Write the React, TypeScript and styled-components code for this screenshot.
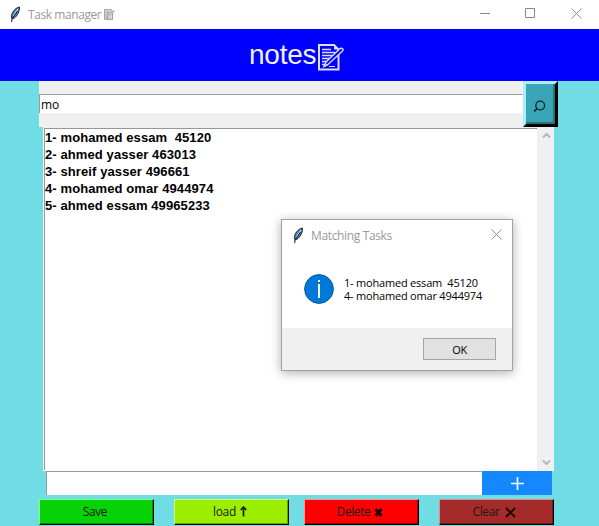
import React from "react";
import styled, { createGlobalStyle } from "styled-components";

const Global = createGlobalStyle`
  * { box-sizing: border-box; }
  body { margin: 0; overflow: hidden; font-family: "Open Sans", "Noto Sans", sans-serif; }
  button, input { font: inherit; margin: 0; padding: 0; border: 0; border-radius: 0; outline: 0; color: #000; }
`;

const Window = styled.div`
  position: relative;
  display: flex;
  flex-direction: column;
  width: 599px;
  height: 526px;
  background: #70dce3;
  overflow: hidden;
`;

const TitleBar = styled.header`
  display: flex;
  align-items: center;
  height: 29px;
  padding: 0 17px 0 8px;
  background: #fff;
  color: #999;
  font-size: 12px;
`;

const TitleText = styled.span<{ $spacing: string }>`
  margin-left: 6px;
  letter-spacing: ${(p) => p.$spacing};
  white-space: pre;
`;

const TitleNote = styled.span`
  display: flex;
  margin-left: 3px;
  margin-right: auto;
`;

const WindowControls = styled.div`
  display: flex;
  gap: 34px;
  align-items: center;
  padding-bottom: 3px;
  svg { display: block; }
  svg:last-child { margin-left: 1px; }
`;

const Banner = styled.h1`
  display: flex;
  align-items: center;
  height: 52px;
  margin: 0;
  padding: 0 0 0 249px;
  background: #0000fe;
  color: #f0f0f0;
  font: 400 28px/52px "Liberation Sans", Arial, sans-serif;
  letter-spacing: -0.25px;
  svg { display: block; margin: 4px 0 0 2px; }
`;

const SearchRow = styled.div`
  display: flex;
  align-items: flex-start;
  width: 519px;
  height: 46px;
  margin-left: 39px;
  background: #f0f0f0;
`;

const Entry = styled.input<{ $height: number; $top?: number }>`
  flex: 1;
  min-width: 0;
  height: ${(p) => p.$height}px;
  margin-top: ${(p) => p.$top ?? 0}px;
  background: #fff;
  border-top: 1px solid #9b9b9b;
  border-left: 1px solid #9b9b9b;
  border-right: 1px solid #fff;
  padding-left: 1px;
  font-size: 12px;
`;

const SearchButton = styled.button`
  display: flex;
  align-items: center;
  justify-content: center;
  width: 35px;
  height: 46px;
  padding: 4px 2px 0 0;
  background: #3ba5b8;
  border: 3px solid;
  border-color: #a6f0fc #000 #000 #a6f0fc;
  box-shadow: inset -2px -2px #28717e;
`;

const ListArea = styled.div`
  display: flex;
  width: 511px;
  height: 344px;
  margin-left: 43px;
`;

const TaskList = styled.ol`
  flex: 1;
  margin: 0;
  padding: 1px 0 0 0;
  list-style: none;
  background: #fff;
  border: 1px solid;
  border-color: #f0f0f0 #eee #fff #fff;
  box-shadow: inset 1px 1px #969696;
  font: 700 13px/17px "Liberation Sans", Arial, sans-serif;
  letter-spacing: 0.1px;
`;

const Task = styled.li`
  height: 17px;
  padding-left: 1px;
  white-space: pre;
`;

const Scrollbar = styled.div`
  display: flex;
  flex-direction: column;
  align-items: center;
  justify-content: space-between;
  width: 16px;
  padding: 5px 0;
  background: #f0f0f0;
`;

const AddRow = styled.div`
  display: flex;
  width: 506px;
  height: 24px;
  margin-left: 46px;
`;

const AddButton = styled.button`
  display: flex;
  align-items: center;
  justify-content: center;
  width: 70px;
  background: #1688ff;
`;

const Actions = styled.div`
  display: flex;
  margin: 4px 0 0 39px;
`;

const ActionButton = styled.button<{ $bg: string; $light: string; $dark: string; $after: number; $gap?: number; $spacing?: string }>`
  display: flex;
  align-items: center;
  justify-content: center;
  gap: ${(p) => p.$gap ?? 4}px;
  width: 115px;
  height: 26px;
  margin-right: ${(p) => p.$after}px;
  padding-right: 3px;
  background: ${(p) => p.$bg};
  border: 1px solid;
  border-color: ${(p) => p.$light} #000 #000 ${(p) => p.$light};
  box-shadow: inset -1px -1px ${(p) => p.$dark};
  font-size: 12px;
  line-height: 22px;
  letter-spacing: ${(p) => p.$spacing ?? "-0.4px"};
  color: #1b1b10;
`;

const Dialog = styled.section`
  position: absolute;
  left: 281px;
  top: 219px;
  display: flex;
  flex-direction: column;
  width: 232px;
  height: 152px;
  background: #fff;
  border: 1px solid #a3a3a3;
  box-shadow: 0 2px 10px rgba(0, 0, 0, 0.32);
`;

const DialogTitle = styled.div`
  display: flex;
  align-items: center;
  height: 30px;
  padding: 0 10px 0 9px;
  color: #999;
  font-size: 12px;
  > :last-child { margin: -2px 0 0 auto; }
`;

const DialogBody = styled.div`
  display: flex;
  flex: 1;
  align-items: center;
  gap: 10px;
  padding: 0 0 0 22px;
`;

const Message = styled.p`
  margin: 0;
  font-size: 11px;
  line-height: 13px;
  letter-spacing: -0.2px;
  white-space: pre;
`;

const DialogFooter = styled.footer`
  display: flex;
  justify-content: flex-end;
  height: 42px;
  padding: 10px 16px 0 0;
  background: #f0f0f0;
`;

const OkButton = styled.button`
  width: 73px;
  height: 22px;
  padding-top: 1px;
  background: #e1e1e1;
  border: 1px solid #a5a5a5;
  font-size: 11px;
  line-height: 19px;
  letter-spacing: -0.3px;
`;

const Feather = () => (
  <svg width="14" height="17" viewBox="0 0 14 17">
    <path d="M11.500 1C7 2 3.400 6.500 3.400 11l.9 2C8.500 11.600 11.500 6.500 11.500 1Z" fill="#557bb0" stroke="#17243e" strokeWidth="1" />
    <path d="M10 3 5.300 10" stroke="#c6dcf5" strokeWidth="1.200" fill="none" />
    <path d="M9.500 5 4 13l-.3 3" stroke="#111827" strokeWidth="1" fill="none" />
  </svg>
);

const Memo = ({ w, h, color, paper }: { w: number; h: number; color: string; paper: string }) => (
  <svg width={w} height={h} viewBox="0 0 26 27">
    <path d="M1 1H16L20.500 5.500V25.500H1Z" fill={paper} stroke={color} strokeWidth="2" />
    <path d="M16 1V5.500H20.500Z" fill={color} />
    <path d="M4 5.500H13M4 8.500H17M4 11.500H16M4 14.500H14M4 17.500H11M4 20.500H8" fill="none" stroke={color} strokeWidth="1.300" />
    <path d="M6 22.500 8 18 22 4.500C24 3.500 26 5.500 24.500 7L10 20.500Z" fill={paper} stroke={color} strokeWidth="1.400" />
    <path d="M6 22.500l3.500-2M11 22.500h6" stroke={color} strokeWidth="1.200" />
  </svg>
);

const Close = () => (
  <svg width="11" height="11" viewBox="0 0 11 11">
    <path d="M.5.5l10 10M10.500.5l-10 10" stroke="#8c8c8c" />
  </svg>
);

const Chevron = ({ down }: { down?: boolean }) => (
  <svg width="9" height="7" viewBox="0 0 9 7">
    <path d={down ? "M1 1.500 4.500 5 8 1.500" : "M1 5.500 4.500 2 8 5.500"} fill="none" stroke="#b8b8b8" strokeWidth="2" />
  </svg>
);

const tasks = [
  "1- mohamed essam  45120",
  "2- ahmed yasser 463013",
  "3- shreif yasser 496661",
  "4- mohamed omar 4944974",
  "5- ahmed essam 49965233",
];

export default function App() {
  return (
    <>
      <Global />
      <Window>
        <TitleBar>
          <Feather />
          <TitleText $spacing="-0.42px">Task manager</TitleText>
          <TitleNote><Memo w={11} h={11} color="#888" paper="#e4e4e4" /></TitleNote>
          <WindowControls>
            <svg width="11" height="11"><path d="M0 5.500h10" stroke="#888" /></svg>
            <svg width="11" height="11"><path d="M.5.5h9v9h-9z" fill="none" stroke="#888" /></svg>
            <Close />
          </WindowControls>
        </TitleBar>
        <Banner>notes<Memo w={26} h={27} color="#dedeff" paper="#0000fe" /></Banner>
        <SearchRow>
          <Entry $height={19} $top={13} defaultValue="mo" />
          <SearchButton aria-label="Search">
            <svg width="13" height="13" viewBox="0 0 13 13">
              <circle cx="7.200" cy="5.500" r="4.400" fill="none" stroke="#08222a" strokeWidth="1.300" />
              <path d="M4.300 8.300 1 11.500" stroke="#08222a" strokeWidth="1.700" />
            </svg>
          </SearchButton>
        </SearchRow>
        <ListArea>
          <TaskList>
            {tasks.map((task) => <Task key={task}>{task}</Task>)}
          </TaskList>
          <Scrollbar><Chevron /><Chevron down /></Scrollbar>
        </ListArea>
        <AddRow>
          <Entry $height={24} aria-label="New task" />
          <AddButton aria-label="Add">
            <svg width="13" height="13"><path d="M6.500 0v13M0 6.500h13" stroke="#f4f8ff" strokeWidth="1.700" /></svg>
          </AddButton>
        </AddRow>
        <Actions>
          <ActionButton $bg="#06d206" $light="#80fa80" $dark="#048d04" $after={20}>Save</ActionButton>
          <ActionButton $bg="#9cee00" $light="#d8ff80" $dark="#68a000" $after={15} $spacing="-0.3px">
            load
            <svg width="7" height="12"><path d="M3.500 10.500V1.500M.7 4 3.500 1 6.300 4" fill="none" stroke="#1b2000" strokeWidth="1.700" /></svg>
          </ActionButton>
          <ActionButton $bg="#ff0000" $light="#ff9090" $dark="#a00000" $after={20} $gap={4}>
            Delete
            <svg width="9" height="9"><path d="M1.500 1l6 7M7.500 1l-6 7" stroke="#200000" strokeWidth="3" /></svg>
          </ActionButton>
          <ActionButton $bg="#a52a2a" $light="#dc8a8a" $dark="#6e1c1c" $after={0} $gap={5}>
            Clear
            <svg width="13" height="11"><path d="M2 1l9 9M11 1 2 10" stroke="#1c0505" strokeWidth="1.900" /></svg>
          </ActionButton>
        </Actions>
        <Dialog role="dialog">
          <DialogTitle>
            <Feather />
            <TitleText $spacing="-0.36px">Matching Tasks</TitleText>
            <Close />
          </DialogTitle>
          <DialogBody>
            <svg width="30" height="30" viewBox="0 0 30 30">
              <circle cx="15" cy="15" r="14.400" fill="#0078d7" stroke="#085a9e" strokeWidth="1" />
              <path d="M15 10v14M15 6v2" stroke="#fff" strokeWidth="2" />
            </svg>
            <Message>{"1- mohamed essam  45120\n4- mohamed omar 4944974"}</Message>
          </DialogBody>
          <DialogFooter><OkButton>OK</OkButton></DialogFooter>
        </Dialog>
      </Window>
    </>
  );
}
